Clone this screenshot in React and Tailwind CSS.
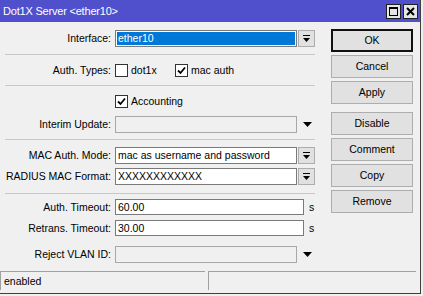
import React from 'react';

const font = { fontFamily: '"Liberation Sans", Arial, sans-serif' };

function DropButton() {
  return (
    <div className="w-[17px] h-[17px] ml-[1px] bg-[#e1e1e1] border border-[#adadad] flex items-center justify-center">
      <svg width="7" height="8" viewBox="0 0 7 8">
        <rect x="0" y="0" width="7" height="1" fill="#000" />
        <path d="M0 3 H7 L3.5 7 Z" fill="#000" />
      </svg>
    </div>
  );
}

function DownArrow() {
  return (
    <div className="w-[20px] flex items-center justify-center">
      <svg width="9" height="5" viewBox="0 0 9 5">
        <path d="M0 0 H9 L4.5 5 Z" fill="#000" />
      </svg>
    </div>
  );
}

function Label({ children }) {
  return <div className="w-[110px] pr-[4px] flex justify-end whitespace-nowrap shrink-0">{children}</div>;
}

function Check({ checked }) {
  return (
    <div className="w-[13px] h-[13px] bg-white border border-[#333] flex items-center justify-center shrink-0">
      {checked && (
        <svg width="9" height="9" viewBox="0 0 9 9">
          <path d="M1 4.5 L3.5 7 L8 1.5" stroke="#000" strokeWidth="1.8" fill="none" />
        </svg>
      )}
    </div>
  );
}

function Field({ label, value, className = 'mt-0', drop, arrow, disabled, unit, width = 'w-[182px]', h = 'h-[17px]' }) {
  return (
    <div className={`flex items-center ${h} ${className}`}>
      <Label>{label}</Label>
      <div
        className={`${width} h-full border flex items-center px-[2px] whitespace-nowrap ${
          disabled ? 'bg-[#f0f0f0] border-[#a8a8a8]' : 'bg-white border-[#7a7a7a]'
        }`}
      >
        {value}
      </div>
      {drop && <DropButton />}
      {arrow && <DownArrow />}
      {unit && <span className="ml-[5px]">{unit}</span>}
    </div>
  );
}

function Btn({ children, primary, className = '' }) {
  return (
    <div
      className={`h-[23px] w-[82px] flex items-center justify-center bg-[#e1e1e1] ${
        primary ? 'border-2 border-[#111]' : 'border border-[#adadad]'
      } ${className}`}
    >
      {children}
    </div>
  );
}

export default function App() {
  return (
    <div className="w-[423px] h-[296px] bg-[#f0f0f0] text-black text-[10.5px] leading-none overflow-hidden" style={font}>
      <div className="w-[421px] h-[294px] border-r border-b border-[#404040] flex flex-col">
        {/* title bar */}
        <div className="h-[22px] bg-[#5050cd] flex items-center justify-between pl-[3px] pr-[2px] shrink-0">
          <span className="text-white text-[11px] tracking-[-0.2px]">Dot1X Server &lt;ether10&gt;</span>
          <div className="flex gap-[2px]">
            <div className="w-[15px] h-[15px] bg-[#e6e6e6] border border-[#202020] flex items-center justify-center">
              <div className="w-[9px] h-[9px] border border-[#000] border-t-2" />
            </div>
            <div className="w-[15px] h-[15px] bg-[#e6e6e6] border border-[#202020] flex items-center justify-center">
              <svg width="9" height="9" viewBox="0 0 9 9">
                <path d="M1 1 L8 8 M8 1 L1 8" stroke="#000" strokeWidth="2" />
              </svg>
            </div>
          </div>
        </div>

        <div className="flex flex-1">
          {/* form */}
          <div className="w-[320px] shrink-0 pl-[5px] flex flex-col">
            <div className="flex items-center h-[17px] mt-[8px]">
              <Label>Interface:</Label>
              <div className="w-[182px] h-full border border-[#7a7a7a] bg-white p-[1px]">
                <div className="h-full bg-[#0078d7] text-white flex items-center px-[1px]">ether10</div>
              </div>
              <DropButton />
            </div>
            <div className="h-px bg-[#c8c8c8] w-[310px] mt-[7px]" />

            <div className="flex items-center h-[30px]">
              <Label>Auth. Types:</Label>
              <Check />
              <span className="ml-[3px] w-[44px]">dot1x</span>
              <Check checked />
              <span className="ml-[3px]">mac auth</span>
            </div>
            <div className="h-px bg-[#c8c8c8] w-[310px]" />

            <div className="flex items-center h-[13px] mt-[9px]">
              <div className="w-[110px]" />
              <Check checked />
              <span className="ml-[3px]">Accounting</span>
            </div>
            <Field label="Interim Update:" className="mt-[8px]" disabled arrow />
            <div className="h-px bg-[#c8c8c8] w-[310px] mt-[6px]" />

            <Field label="MAC Auth. Mode:" className="mt-[7px]" value="mac as username and password" drop />
            <Field label="RADIUS MAC Format:" className="mt-[4px]" value="XXXXXXXXXXXX" drop />
            <div className="h-px bg-[#c8c8c8] w-[310px] mt-[8px]" />

            <Field label="Auth. Timeout:" className="mt-[5px]" h="h-[16px]" width="w-[189px]" value="60.00" unit="s" />
            <Field label="Retrans. Timeout:" className="mt-[5px]" h="h-[16px]" width="w-[189px]" value="30.00" unit="s" />
            <Field label="Reject VLAN ID:" className="mt-[10px]" disabled arrow />
          </div>

          {/* buttons */}
          <div className="ml-[11px] flex flex-col pt-[7px] gap-[3px]">
            <Btn primary>OK</Btn>
            <Btn>Cancel</Btn>
            <Btn>Apply</Btn>
            <Btn className="mt-[5px]">Disable</Btn>
            <Btn>Comment</Btn>
            <Btn>Copy</Btn>
            <Btn>Remove</Btn>
          </div>
        </div>

        {/* status bar */}
        <div className="flex h-[19px] gap-[3px] mb-[3px] shrink-0 pr-[4px]">
          <div className="w-[205px] border-t border-l border-[#a0a0a0] flex items-center pl-[3px]">enabled</div>
          <div className="flex-1 border-t border-l border-[#a0a0a0]" />
        </div>
      </div>
    </div>
  );
}
